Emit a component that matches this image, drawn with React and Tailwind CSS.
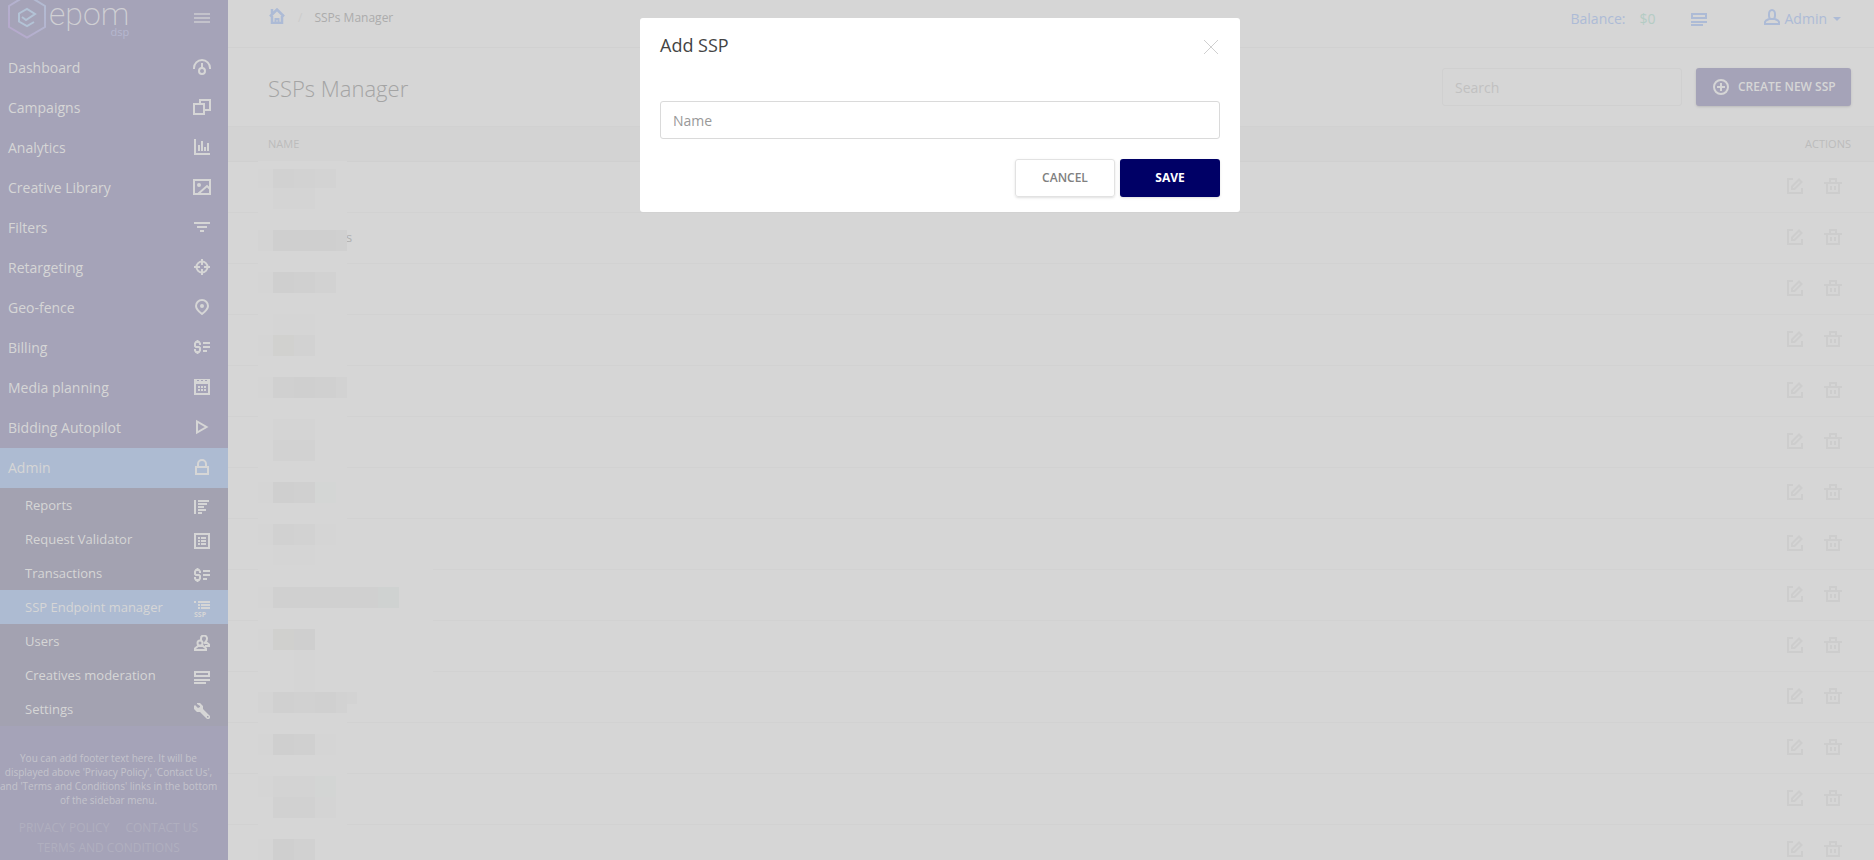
import { useState } from 'react'

const ICONS = {
  dashboard: (
    <g fill="none" stroke="currentColor" strokeWidth="2">
      <path d="M1 10V9a8 8 0 0 1 16 0v1M9 4v5" />
      <circle cx="9" cy="12" r="3" />
    </g>
  ),
  campaigns: <path d="M1 5h10v10H1zM7 5V1h10v10h-6" fill="none" stroke="currentColor" strokeWidth="2" />,
  analytics: <path d="M1 0h2v14h14v2H1zM5 6h2v6H5zM8 2h2v10H8zM11 8h2v4h-2zM14 4h2v8h-2z" />,
  image: (
    <g>
      <path d="M1 1h16v14H1zM5 15l9-8 3 3" fill="none" stroke="currentColor" strokeWidth="2" />
      <circle cx="6" cy="6" r="2" />
    </g>
  ),
  filters: <path d="M1 3h16v2H1zM4 7h10v2H4zM7 11h4v2H7z" />,
  target: (
    <g fill="none" stroke="currentColor" strokeWidth="2">
      <circle cx="9" cy="8" r="5.5" />
      <path d="M9 0v6M9 10v6M1 8h6M11 8h6" />
    </g>
  ),
  pin: (
    <g>
      <path d="M9 15C5 12 3 10 3 7a6 6 0 0 1 12 0c0 3-2 5-6 8z" fill="none" stroke="currentColor" strokeWidth="2" />
      <circle cx="9" cy="7" r="2" />
    </g>
  ),
  billing: (
    <g>
      <path d="M10 3h7v2h-7zM10 7h7v2h-7zM10 11h4v2h-4z" />
      <path d="M7 6V4.500L6 3H3L2 4.500V7l1 1h3l1 1v2.500L6 13H3l-1-1.500V10M4.500 1v3M4.500 12v3" fill="none" stroke="currentColor" strokeWidth="2" />
    </g>
  ),
  calendar: (
    <path fillRule="evenodd" d="M1 0h16v16H1zM3 5v9h12V5zM4 1v1h2V1zM12 1v1h2V1zM8 1v1h2V1zM5 7h2v2H5zM8 7h2v2H8zM11 7h2v2h-2zM5 10h2v2H5zM8 10h2v2H8zM11 10h2v2h-2z" />
  ),
  play: <path d="M4 2.500v11l9.500-5.500z" fill="none" stroke="currentColor" strokeWidth="2" />,
  lock: <path d="M3 8h12v7H3zM5 8V5a4 4 0 0 1 8 0v3" fill="none" stroke="currentColor" strokeWidth="2" />,
  reports: <path d="M1 1h2v14H1zM5 1h11v2H5zM5 4h9v2H5zM5 7h6v2H5zM5 10h8v2H5zM5 13h4v2H5z" />,
  validator: (
    <path fillRule="evenodd" d="M1 0h16v16H1zM3 2v12h12V2zM5 4h2v2H5zM8 4h5v2H8zM5 7h2v2H5zM8 7h5v2H8zM5 10h2v2H5zM8 10h5v2H8z" />
  ),
  ssp: (
    <g>
      <path d="M1 0h2v2H1zM5 0h12v2H5zM5 3h2v2H5zM8 3h9v2H8zM5 6h2v2H5zM8 6h9v2H8z" />
      <text x="1" y="16" fontSize="7" fontWeight="700" fontFamily="Open Sans, sans-serif">SSP</text>
    </g>
  ),
  users: (
    <g fill="none" stroke="currentColor" strokeWidth="2">
      <path d="M2 15v-1.500L5 11h5l3 2.500V15z" />
      <circle cx="7" cy="8" r="2.500" />
      <path d="M8 5V3.500a3 3 0 0 1 6 0c0 1.500-.500 2.500-1.500 3.500L11 8.500M13 7l3 2.500V11h-4" />
    </g>
  ),
  moderation: <path fillRule="evenodd" d="M1 2h16v6H1zM3 4v2h12V4zM1 10h16v2H1zM1 13h12v2H1z" />,
  wrench: (
    <path
      fillRule="evenodd"
      d="M4 0h3l3 3v3l6 6 1 1v2l-1 1h-2l-1-1-6-6H4L1 6V3l1-1 3 3 2-1V3L4 1zM14 13v1.500h1.500V13z"
    />
  ),
  home: (
    <g fill="none" stroke="currentColor" strokeWidth="2">
      <path d="M2 8.500l7-7 7 7M4 8v7h10V8M4 6V1" strokeWidth="2.500" />
      <path d="M7.500 15v-4h3v4" />
    </g>
  ),
  user: (
    <g fill="none" stroke="currentColor" strokeWidth="2">
      <path d="M6 5a3 4 0 0 1 6 0v2c0 1-.500 2-1 3H7c-.500-1-1-2-1-3z" />
      <path d="M6 10l-3 1.500L2 13v2h14v-2l-1-1.500L12 10" />
    </g>
  ),
  plus: (
    <g fill="none" stroke="currentColor" strokeWidth="2">
      <circle cx="9" cy="8" r="7" />
      <path d="M9 4v8M5 8h8" />
    </g>
  ),
  edit: (
    <g fill="none" stroke="currentColor" strokeWidth="2">
      <path d="M7 1H2v14h14v-5" />
      <path d="M6 11V8.500l7-7L15.500 4l-7 7z" />
    </g>
  ),
  trash: <path fillRule="evenodd" d="M5 0h8v4h5v2h-2v10H2V6H0V4h5zM7 2v2h4V2zM4 6v8h10V6zM6 8h2v4H6zM10 8h2v4h-2z" />,
}

const NAV = [
  { label: 'Dashboard', icon: 'dashboard' },
  { label: 'Campaigns', icon: 'campaigns' },
  { label: 'Analytics', icon: 'analytics' },
  { label: 'Creative Library', icon: 'image' },
  { label: 'Filters', icon: 'filters' },
  { label: 'Retargeting', icon: 'target' },
  { label: 'Geo-fence', icon: 'pin' },
  { label: 'Billing', icon: 'billing' },
  { label: 'Media planning', icon: 'calendar' },
  { label: 'Bidding Autopilot', icon: 'play' },
  { label: 'Admin', icon: 'lock', active: true },
]

const ADMIN_NAV = [
  { label: 'Reports', icon: 'reports' },
  { label: 'Request Validator', icon: 'validator' },
  { label: 'Transactions', icon: 'billing' },
  { label: 'SSP Endpoint manager', icon: 'ssp', active: true },
  { label: 'Users', icon: 'users' },
  { label: 'Creatives moderation', icon: 'moderation' },
  { label: 'Settings', icon: 'wrench' },
]

// only the tail of the second name is left uncovered
const ROWS = ['', 's', '', '', '', '', '', '', '', '', '', '', '', '']

// [x, y, width, height, fill] of the tiles that cover the names
const TILES = [
  [0, 0, 89, 699, '#d6d6d6'], [0, 405, 175, 125, '#d6d6d6'],
  [0, 8, 15, 19, '#d5d5d5'], [15, 8, 21, 19, '#d1d1d1'], [36, 8, 21, 19, '#d2d2d2'], [57, 8, 21, 19, '#d3d3d3'], [15, 27, 42, 21, '#d4d4d4'],
  [0, 69, 15, 21, '#d4d4d4'], [15, 69, 63, 21, '#cfcfcf'], [78, 69, 11, 21, '#d0d0d0'],
  [0, 111, 15, 21, '#d5d5d5'], [15, 111, 21, 21, '#cfcfcf'], [36, 111, 21, 21, '#d0d0d0'], [57, 111, 21, 21, '#d2d2d2'],
  [15, 153, 42, 21, '#d5d5d5'], [0, 174, 15, 21, '#d5d5d5'], [15, 174, 21, 21, '#d1d1cf'], [36, 174, 21, 21, '#d2d2d2'],
  [0, 216, 15, 21, '#d5d5d5'], [15, 216, 21, 21, '#d0d0d0'], [36, 216, 21, 21, '#cfcfcf'], [57, 216, 21, 21, '#d0d0d0'], [78, 216, 11, 21, '#d2d2d2'],
  [15, 258, 42, 21, '#d4d4d4'], [15, 279, 42, 21, '#d2d2d2'],
  [0, 321, 15, 21, '#d5d5d5'], [15, 321, 21, 21, '#cfcfcf'], [36, 321, 21, 21, '#d0d0d0'], [57, 321, 21, 21, '#d4d6d5'],
  [0, 363, 15, 21, '#d5d5d5'], [15, 363, 21, 21, '#d1d1d1'], [36, 363, 21, 21, '#d2d2d2'], [57, 363, 21, 21, '#d5d5d5'], [15, 384, 42, 20, '#d5d5d5'],
  [0, 426, 15, 21, '#d5d5d5'], [15, 426, 105, 21, '#d0d0d0'], [120, 426, 21, 21, '#cfd2d1'],
  [0, 468, 15, 21, '#d5d5d5'], [15, 468, 21, 21, '#d0d0ce'], [36, 468, 21, 21, '#cfcfcf'], [36, 489, 21, 42, '#d5d5d5'],
  [0, 531, 15, 21, '#d4d4d4'], [15, 531, 21, 21, '#d0d0d0'], [36, 531, 21, 21, '#d1d1d1'], [57, 531, 21, 21, '#d0d0d0'], [78, 531, 11, 21, '#d2d2d2'], [89, 531, 10, 12, '#d3d3d3'],
  [0, 573, 15, 21, '#d5d5d5'], [15, 573, 21, 21, '#cfcfcf'], [36, 573, 21, 21, '#d0d0d0'], [57, 573, 21, 21, '#d5d5d5'],
  [0, 615, 15, 21, '#d5d5d5'], [15, 615, 42, 21, '#d3d3d3'], [57, 615, 21, 21, '#d3d5d4'], [15, 636, 42, 21, '#d1d1d1'], [57, 636, 21, 21, '#d4d4d4'],
  [0, 678, 15, 21, '#d5d5d5'], [15, 678, 21, 21, '#cfcfcf'], [36, 678, 21, 21, '#d1d1d1'],
]

function Icon({ name, className = '' }) {
  return (
    <svg viewBox="0 0 18 16" fill="currentColor" className={`w-[18px] h-4 shrink-0 ${className}`} aria-hidden="true">
      {ICONS[name]}
    </svg>
  )
}

function Logo() {
  return (
    <a href="#" className="flex items-start text-[#d0d0d4]" aria-label="epom dsp">
      <svg viewBox="0 0 38 39" className="w-[38px] h-[39px] shrink-0" fill="none" aria-hidden="true">
        <defs>
          <linearGradient id="hex" x1="0" y1="1" x2="1" y2="0">
            <stop offset="0" stopColor="#b6a6cb" />
            <stop offset="1" stopColor="#b2bed3" />
          </linearGradient>
        </defs>
        <path d="M19-5L37 6v21L19 37.500 1 27V6z" stroke="url(#hex)" strokeWidth="2" />
        <path d="M14 17l4 3 9-6-8-5-8 4.500v8l8 4.500 7-4" stroke="#b3c3d6" strokeWidth="2" />
      </svg>
      <span className="flex flex-col items-end ml-[3px]">
        <span className="font-[Roboto,sans-serif] font-extralight text-[32px] leading-7">epom</span>
        <span className="text-[11px] leading-2 text-[#b5b7cf]">dsp</span>
      </span>
    </a>
  )
}

function Sidebar() {
  return (
    <aside className="w-[228px] shrink-0 bg-[#a5a3b8] text-[#d6d6d6] flex flex-col overflow-hidden">
      <div className="flex justify-between items-start h-12 pl-2 pr-[17px] shrink-0">
        <Logo />
        <button type="button" aria-label="Toggle menu" className="mt-[10px] text-[#c3c2cb]">
          <svg viewBox="0 0 18 16" fill="currentColor" className="w-[18px] h-4">
            <path d="M1 3h16v2H1zM1 7h16v2H1zM1 11h16v2H1z" />
          </svg>
        </button>
      </div>

      <nav>
        {NAV.map(({ label, icon, active }) => (
          <a
            key={label}
            href="#"
            className={`flex items-center justify-between h-10 pl-2 pr-[17px] text-sm ${active ? 'bg-[#adbbd2]' : ''}`}
          >
            {label}
            <Icon name={icon} className="mb-0.5" />
          </a>
        ))}
        <div className="bg-[#a3a2b1]">
          {ADMIN_NAV.map(({ label, icon, active }) => (
            <a
              key={label}
              href="#"
              className={`flex items-center justify-between h-[34px] pt-0.5 pl-[25px] pr-[17px] text-[13px] ${active ? 'bg-[#adbbd2]' : ''}`}
            >
              {label}
              <Icon name={icon} className="mt-0.5" />
            </a>
          ))}
        </div>
      </nav>

      <div className="w-[217px] shrink-0 pt-[25px] text-center text-[#c4c3cc]">
        <p className="text-[10px] leading-[14px]">
          You can add footer text here. It will be<br />
          displayed above 'Privacy Policy', 'Contact Us',<br />
          <span className="whitespace-nowrap">and 'Terms and Conditions' links in the bottom</span><br />
          of the sidebar menu.
        </p>
        <div className="flex flex-wrap justify-center gap-x-4 mt-[11px] text-xs leading-5 text-[#b0afbf]">
          <a href="#">PRIVACY POLICY</a>
          <a href="#">CONTACT US</a>
          <a href="#">TERMS AND CONDITIONS</a>
        </div>
      </div>
    </aside>
  )
}

function TopBar() {
  return (
    <header className="flex items-start justify-between h-12 pl-10 pr-[33px] border-b border-[#d1d1d1]">
      <div className="flex items-center pt-2 text-xs leading-5 text-[#acacac]">
        <a href="#" aria-label="Home" className="text-[#adbbd6]">
          <Icon name="home" className="mb-1" />
        </a>
        <span className="ml-3 text-[#cccccc]">/</span>
        <span className="ml-3">SSPs Manager</span>
      </div>
      <div className="flex items-center pt-[9px] text-sm leading-5 text-[#adbbd6]">
        <span>Balance:</span>
        <span className="ml-[14px] text-[#b4ccc4]">$0</span>
        <a href="#" aria-label="News" className="ml-[34px]"><Icon name="moderation" /></a>
        <button type="button" className="flex items-center ml-[55px]">
          <Icon name="user" className="mb-1" />
          <span className="ml-1">Admin</span>
          <svg viewBox="0 0 8 4" fill="currentColor" className="w-2 h-1 ml-1.5"><path d="M0 0h8L4 4z" /></svg>
        </button>
      </div>
    </header>
  )
}

function SspTable() {
  return (
    <div className="relative">
      <table className="w-full border-collapse">
        <thead className="bg-[#d3d3d3] text-[11px] leading-4 text-[#bcbcbc]">
          <tr className="h-[34px] border-b border-[#d0d0d0]">
            <th className="pl-10 text-left font-normal">NAME</th>
            <th className="pr-[23px] text-right font-normal">ACTIONS</th>
          </tr>
        </thead>
        <tbody>
          {ROWS.map((name, i) => (
            <tr key={i} className="h-[51px] border-b border-[#d2d2d2] text-[13px] text-[#b0b0b0]">
              <td className="pl-[118px] pb-0.5 leading-4">{name}</td>
              <td className="pr-8 pb-0.5">
                <div className="flex justify-end gap-5 text-[#cdcdcd]">
                  <button type="button" aria-label="Edit"><Icon name="edit" /></button>
                  <button type="button" aria-label="Delete"><Icon name="trash" /></button>
                </div>
              </td>
            </tr>
          ))}
        </tbody>
      </table>
      <svg className="absolute left-[30px] top-[34px] w-[175px] h-[699px]" viewBox="0 0 175 699" shapeRendering="crispEdges" aria-hidden="true">
        {TILES.map(([x, y, w, h, fill], i) => (
          <rect key={i} x={x} y={y} width={w} height={h} fill={fill} />
        ))}
      </svg>
    </div>
  )
}

function AddSspDialog({ onClose }) {
  const [name, setName] = useState('')

  return (
    <div className="fixed inset-0 flex items-start justify-center pt-[18px] pl-1.5">
      <form
        role="dialog"
        aria-labelledby="dialog-title"
        onSubmit={e => e.preventDefault()}
        className="w-[600px] rounded-[3px] bg-white px-5 pt-[15px] pb-[15px]"
      >
        <div className="flex items-start justify-between">
          <h2 id="dialog-title" className="text-lg leading-6 text-[#444444]">Add SSP</h2>
          <button type="button" aria-label="Close" onClick={onClose} className="mt-[7px] mr-0.5 text-[#d0d0d0]">
            <svg viewBox="0 0 14 14" className="w-[14px] h-[14px]" fill="none" stroke="currentColor">
              <path d="M0 0l14 14M14 0L0 14" />
            </svg>
          </button>
        </div>
        <input
          aria-label="Name"
          placeholder="Name"
          value={name}
          onChange={e => setName(e.target.value)}
          className="block w-full h-[38px] mt-11 px-3 border border-[#dadada] rounded-[3px] text-sm placeholder:text-[#999999] outline-none"
        />
        <div className="flex justify-end gap-[5px] mt-5 text-xs">
          <button type="button" onClick={onClose} className="w-[100px] h-[38px] border border-[#e2e2e2] rounded-[3px] font-semibold text-[#808080] shadow-sm">
            CANCEL
          </button>
          <button type="submit" className="w-[100px] h-[38px] rounded-[3px] bg-[#000066] font-bold text-white shadow-sm">
            SAVE
          </button>
        </div>
      </form>
    </div>
  )
}

export default function App() {
  const [open, setOpen] = useState(true)

  return (
    <div className="flex h-screen overflow-hidden bg-[#d6d6d6] font-['Open_Sans',sans-serif]">
      <Sidebar />
      <main className="flex-1 min-w-0">
        <TopBar />
        <div className="flex items-center justify-between h-[79px] pl-10 pr-[23px] border-b border-[#d1d1d1]">
          <h1 className="pt-0.5 text-[22px] leading-8 font-light text-[#a4a4a4]">SSPs Manager</h1>
          <div className="flex gap-[14px]">
            <input
              type="search"
              aria-label="Search"
              placeholder="Search"
              className="w-[240px] h-[38px] px-3 border border-[#d0d0d0] rounded-[3px] text-sm placeholder:text-[#c1c1c1] outline-none"
            />
            <button
              type="button"
              onClick={() => setOpen(true)}
              className="flex items-center h-[38px] w-[155px] pl-4 rounded-[3px] bg-[#a5a3b8] text-xs font-semibold text-[#d6d6d6] whitespace-nowrap shadow-sm"
            >
              <Icon name="plus" className="mr-2" />
              CREATE NEW SSP
            </button>
          </div>
        </div>
        <SspTable />
      </main>
      {open && <AddSspDialog onClose={() => setOpen(false)} />}
    </div>
  )
}
